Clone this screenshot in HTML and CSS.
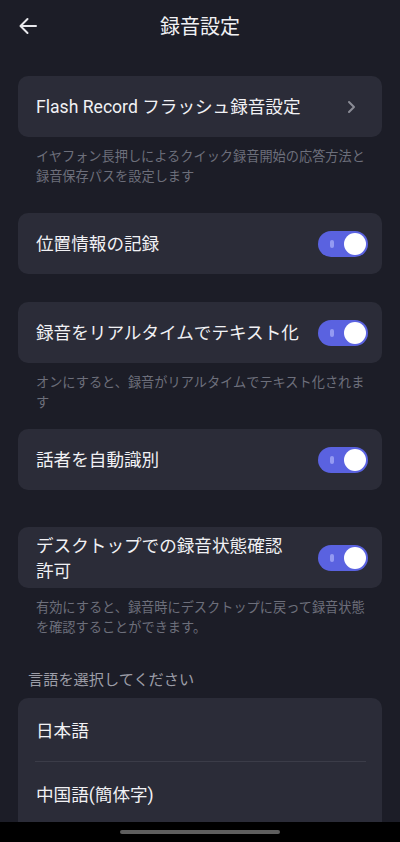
FILE: index.html
```html
<!DOCTYPE html>
<html lang="ja">
<head>
<meta charset="utf-8">
<link rel="stylesheet" href="styles.css">
</head>
<body>
<div class="screen">
  <header class="topbar">
    <span class="back">
      <svg width="20" height="18" viewBox="0 0 20 18"><path d="M18 9H3M9.5 2L2.5 9l7 7" fill="none" stroke="#e8e8ec" stroke-width="2" stroke-linecap="round" stroke-linejoin="round"/></svg>
    </span>
    <h1 class="title">録音設定</h1>
    <span></span>
  </header>

  <main class="content">
    <div class="card row card-first">
      <span class="label">Flash Record フラッシュ録音設定</span>
      <svg class="chevron" width="9" height="14" viewBox="0 0 9 14"><path d="M2 2l5 5-5 5" fill="none" stroke="#8b8c96" stroke-width="2" stroke-linecap="round" stroke-linejoin="round"/></svg>
    </div>
    <p class="desc">イヤフォン長押しによるクイック録音開始の応答方法と録音保存パスを設定します</p>

    <div class="card row card-loc">
      <span class="label">位置情報の記録</span>
      <span class="toggle"><span class="mark"></span><span class="knob"></span></span>
    </div>

    <div class="card row card-rt">
      <span class="label">録音をリアルタイムでテキスト化</span>
      <span class="toggle"><span class="mark"></span><span class="knob"></span></span>
    </div>
    <p class="desc">オンにすると、録音がリアルタイムでテキスト化されます</p>

    <div class="card row card-spk">
      <span class="label">話者を自動識別</span>
      <span class="toggle"><span class="mark"></span><span class="knob"></span></span>
    </div>

    <div class="card row card-desk">
      <span class="label two">デスクトップでの録音状態確認<br>許可</span>
      <span class="toggle"><span class="mark"></span><span class="knob"></span></span>
    </div>
    <p class="desc">有効にすると、録音時にデスクトップに戻って録音状態を確認することができます。</p>

    <p class="section">言語を選択してください</p>
    <div class="card list">
      <div class="item">日本語</div>
      <div class="divider"></div>
      <div class="item">中国語(簡体字)</div>
    </div>
  </main>

  <div class="navbar"><span class="home"></span></div>
</div>
</body>
</html>
```

FILE: styles.css
```css
* { box-sizing: border-box; }
html, body {
  margin: 0;
  padding: 0;
  background: #1c1d27;
  height: 842px;
  overflow: hidden;
}
body {
  font-family: Roboto, "Noto Sans CJK JP", sans-serif;
  color: #f1f1f4;
}
.screen {
  width: 400px;
  height: 842px;
  position: relative;
  overflow: hidden;
}
.topbar {
  height: 54px;
  display: grid;
  grid-template-columns: 56px 1fr 56px;
  align-items: center;
}
.back {
  display: flex;
  align-items: center;
  padding-left: 18px;
  margin-top: -3px;
}
.back svg { display: block; }
.title {
  margin: 0;
  text-align: center;
  font-size: 20px;
  font-weight: 400;
  line-height: 26px;
}
.content {
  padding: 0 18px;
  display: flex;
  flex-direction: column;
}
.card {
  background: #2b2c38;
  border-radius: 10px;
}
.row {
  height: 61px;
  display: flex;
  align-items: center;
  justify-content: space-between;
  padding: 0 14px 0 18px;
}
.label {
  font-size: 17.6px;
  line-height: 24px;
  white-space: nowrap;
}
.label.two {
  line-height: 25px;
  margin-top: 3px;
}
.chevron { margin-right: 12px; display: block; }
.card-first { margin-top: 22px; }
.card-loc { margin-top: 27px; }
.card-rt { margin-top: 28px; }
.card-spk { margin-top: 17px; }
.card-desk { margin-top: 37px; }
.desc {
  margin: 10px 0 0;
  padding: 0 14px 0 18px;
  font-size: 13.2px;
  line-height: 19.5px;
  color: #6d6f7b;
}
.toggle {
  position: relative;
  width: 50px;
  height: 26px;
  border-radius: 13px;
  background: #5a62e0;
  flex-shrink: 0;
}
.mark {
  position: absolute;
  left: 12px;
  top: 9px;
  width: 4px;
  height: 8px;
  border-radius: 2px;
  background: #949af2;
}
.knob {
  position: absolute;
  right: 2px;
  top: 2px;
  width: 22px;
  height: 22px;
  border-radius: 50%;
  background: #ffffff;
}
.section {
  margin: 33px 0 0;
  padding-left: 10px;
  font-size: 15.2px;
  line-height: 20px;
  color: #9c9da7;
}
.list {
  margin-top: 8px;
  padding-bottom: 20px;
}
.item {
  height: 63px;
  display: flex;
  align-items: center;
  padding: 0 18px;
  font-size: 17.6px;
}
.divider {
  height: 1px;
  margin: 0 16px 0 17px;
  background: #3b3c48;
}
.navbar {
  position: absolute;
  left: 0;
  right: 0;
  bottom: 0;
  height: 20px;
  background: #000000;
  display: flex;
  justify-content: center;
  padding-top: 8px;
}
.home {
  width: 160px;
  height: 4px;
  border-radius: 2px;
  background: #5e5e5e;
}
```
